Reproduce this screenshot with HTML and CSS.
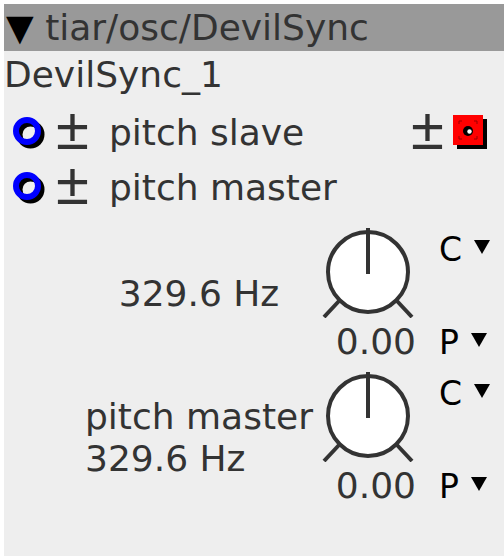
FILE: index.html
```html
<!DOCTYPE html>
<html lang="en">
<head>
    <meta charset="UTF-8">
    <title>tiar/osc/DevilSync</title>
    <link rel="stylesheet" href="styles.css">
</head>
<body>
    <div class="panel">
        <div class="header"><span class="toggle">▼</span> tiar/osc/DevilSync</div>
        <div class="name">DevilSync_1</div>

        <div class="ports">
            <div class="port">
                <svg class="port-icon" width="36" height="36" viewBox="0 0 36 36">
                    <circle cx="19.5" cy="19.5" r="11" fill="none" stroke="#000" stroke-width="6"/>
                    <circle cx="16" cy="16" r="11" fill="none" stroke="#00f" stroke-width="6"/>
                </svg>
                <span class="pm">±</span>
                <span class="port-name">pitch slave</span>
                <span class="pm pm-right">±</span>
                <svg class="port-out" width="36" height="36" viewBox="0 0 36 36">
                    <rect x="4" y="4" width="30" height="30" fill="#000"/>
                    <rect x="0" y="0" width="30" height="30" fill="#f00"/>
                    <path d="M6 9V6h3M21 6h3v3M24 21v3h-3M9 24H6v-3" fill="none" stroke="#900" stroke-width="1"/>
                    <circle cx="15" cy="16" r="5" fill="#000"/>
                    <circle cx="16.5" cy="16.5" r="2.2" fill="#fff"/>
                </svg>
            </div>
            <div class="port">
                <svg class="port-icon" width="36" height="36" viewBox="0 0 36 36">
                    <circle cx="19.5" cy="19.5" r="11" fill="none" stroke="#000" stroke-width="6"/>
                    <circle cx="16" cy="16" r="11" fill="none" stroke="#00f" stroke-width="6"/>
                </svg>
                <span class="pm">±</span>
                <span class="port-name">pitch master</span>
            </div>
        </div>

        <div class="knobs">
            <div class="knob-row">
                <div class="label"><div>329.6 Hz</div></div>
                <div class="knob">
                    <svg width="96" height="96" viewBox="0 0 96 96">
                        <line x1="19" y1="79" x2="4" y2="95" stroke="#333" stroke-width="4"/>
                        <line x1="77" y1="79" x2="92" y2="95" stroke="#333" stroke-width="4"/>
                        <circle cx="48" cy="50" r="40" fill="#fff" stroke="#333" stroke-width="4"/>
                        <line x1="48" y1="6" x2="48" y2="52" stroke="#333" stroke-width="4"/>
                    </svg>
                    <div class="value">0.00</div>
                </div>
                <div class="modes">
                    <div class="mode">C<svg class="arrow" width="16" height="14" viewBox="0 0 16 14"><polygon points="0,0 16,0 8,14" fill="#000"/></svg></div>
                    <div class="mode">P<svg class="arrow" width="16" height="14" viewBox="0 0 16 14"><polygon points="0,0 16,0 8,14" fill="#000"/></svg></div>
                </div>
            </div>

            <div class="knob-row">
                <div class="label"><div>pitch master<br>329.6 Hz</div></div>
                <div class="knob">
                    <svg width="96" height="96" viewBox="0 0 96 96">
                        <line x1="19" y1="79" x2="4" y2="95" stroke="#333" stroke-width="4"/>
                        <line x1="77" y1="79" x2="92" y2="95" stroke="#333" stroke-width="4"/>
                        <circle cx="48" cy="50" r="40" fill="#fff" stroke="#333" stroke-width="4"/>
                        <line x1="48" y1="6" x2="48" y2="52" stroke="#333" stroke-width="4"/>
                    </svg>
                    <div class="value">0.00</div>
                </div>
                <div class="modes">
                    <div class="mode">C<svg class="arrow" width="16" height="14" viewBox="0 0 16 14"><polygon points="0,0 16,0 8,14" fill="#000"/></svg></div>
                    <div class="mode">P<svg class="arrow" width="16" height="14" viewBox="0 0 16 14"><polygon points="0,0 16,0 8,14" fill="#000"/></svg></div>
                </div>
            </div>
        </div>
    </div>
</body>
</html>
```

FILE: styles.css
```css
body {
    margin: 0;
    background: #fff;
    font-family: "DejaVu Sans", sans-serif;
    color: #333;
}
.panel {
    margin: 4px 0 0 4px;
    width: 500px;
    height: 552px;
    background: #eee;
    font-size: 36px;
}
.header {
    height: 47px;
    line-height: 47px;
    background: #999;
    padding-left: 2px;
    white-space: nowrap;
}
.toggle {
    color: #000;
}
.name {
    height: 47px;
    line-height: 47px;
}
.ports {
    margin-top: 7px;
}
.port {
    display: flex;
    align-items: center;
    height: 55px;
    white-space: nowrap;
}
.port-icon {
    margin-left: 7px;
    flex: none;
}
.pm {
    margin-left: 9px;
    margin-bottom: 8px;
    font-family: "Liberation Sans", sans-serif;
    font-size: 60px;
    line-height: 40px;
}
.port-name {
    margin-left: 20px;
}
.pm-right {
    margin-left: auto;
}
.port-out {
    margin-left: 9px;
    margin-right: 15px;
    flex: none;
}
.knobs {
    margin-top: 7px;
}
.knob-row {
    display: flex;
    height: 144px;
}
.label {
    width: 242px;
    padding-left: 74px;
    display: flex;
    align-items: center;
    justify-content: center;
    line-height: 42px;
}
.knob {
    width: 96px;
    display: flex;
    flex-direction: column;
}
.value {
    height: 48px;
    line-height: 48px;
    text-align: right;
}
.modes {
    margin-left: 23px;
    padding-top: 3px;
    display: flex;
    flex-direction: column;
    justify-content: space-between;
    height: 141px;
}
.mode {
    display: flex;
    align-items: center;
    height: 48px;
    font-size: 33px;
    color: #000;
}
.arrow {
    margin-left: 12px;
    margin-bottom: 4px;
}
```
